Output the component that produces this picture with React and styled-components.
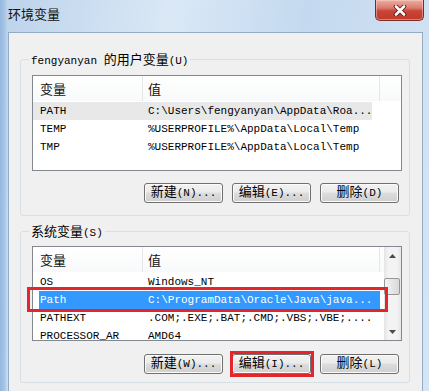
import React from 'react';
import styled, { createGlobalStyle } from 'styled-components';

const GlobalStyle = createGlobalStyle`
  html, body {
    margin: 0;
    padding: 0;
  }
  body {
    width: 429px;
    height: 391px;
    overflow: hidden;
  }
`;

const Window = styled.div`
  width: 429px;
  height: 391px;
  box-sizing: border-box;
  display: flex;
  flex-direction: column;
  overflow: hidden;
  color: #000;
  font-family: "Liberation Mono", "Noto Sans CJK SC", monospace;
  font-size: 11px;
  background:
    linear-gradient(to right, #94b8dd 0, #a9c7e6 5px, transparent 7px),
    linear-gradient(100deg, #bcd3eb 0%, #dae8f6 35%, #c4d9ef 62%, #d6e5f4 100%);
`;

const TitleBar = styled.div`
  height: 32px;
  flex: none;
  display: flex;
  justify-content: space-between;
  align-items: flex-start;
`;

const Title = styled.div`
  padding: 6px 0 0 8px;
  font-family: "Noto Sans CJK SC", sans-serif;
  font-size: 13px;
  line-height: 16px;
  color: #111;
`;

const CloseButton = styled.button`
  width: 49px;
  height: 21px;
  margin-right: 5px;
  padding: 0;
  display: flex;
  align-items: center;
  justify-content: center;
  border: 1px solid #7a2c24;
  border-top: 0;
  border-radius: 0 0 5px 5px;
  background: linear-gradient(#eab0a4 0%, #dc7a6c 40%, #c84536 55%, #c0392c 100%);
  box-shadow: inset 0 0 0 1px rgba(255, 220, 210, 0.45);
`;

const Client = styled.div`
  flex: 1;
  margin: 0 6px 0 8px;
  display: flex;
  flex-direction: column;
  background: #f0f0f0;
  border: 1px solid #93abc4;
  border-bottom: 0;
`;

const Group = styled.fieldset`
  margin: ${p => p.$gap}px 12px 0 11px;
  padding: ${p => p.$padTop}px 7px ${p => p.$padBottom}px 11px;
  min-width: 0;
  border: 1px solid #d5dfe5;
  border-radius: 3px;
`;

const Legend = styled.legend`
  margin-left: -3px;
  padding: 0 2px;
  height: 14px;
  line-height: 14px;
  white-space: nowrap;
`;

const Cjk = styled.span`
  font-family: "Noto Sans CJK SC", sans-serif;
  font-size: 13px;
  line-height: 14px;
`;

const ListBox = styled.div`
  height: ${p => p.$height}px;
  box-sizing: border-box;
  display: flex;
  border: 1px solid #828790;
  background: #fff;
`;

const ListBody = styled.div`
  flex: 1;
  min-width: 0;
  clip-path: inset(0 -20px 0 -20px);
`;

const Columns = styled.div`
  display: grid;
  grid-template-columns: 110px 237px 1fr;
`;

const HeaderRow = styled(Columns)`
  height: 25px;
  margin-bottom: 1px;
  background: linear-gradient(#ffffff, #f8f9fa);
`;

const HeadCell = styled.div`
  padding-left: ${p => (p.$value ? 5 : 7)}px;
  border-right: 1px solid #e4e6e9;
  font-family: "Noto Sans CJK SC", sans-serif;
  font-size: 13px;
  line-height: 25px;
  color: #111;

  &:last-child {
    border-right: 0;
  }
`;

const selection = {
  idle: 'linear-gradient(#e8e8e8, #e8e8e8) 0 0 / 339px 100% no-repeat',
  focus: 'linear-gradient(#3399ff, #3399ff) 6px 0 / 341px 100% no-repeat',
};

const Row = styled(Columns)`
  position: relative;
  height: 18px;
  line-height: 18px;
  white-space: nowrap;
  color: ${p => (p.$state === 'focus' ? '#fff' : '#000')};
  background: ${p => selection[p.$state] || 'none'};
`;

const NameCell = styled.div`
  padding-left: 7px;
  overflow: hidden;
`;

const ValueCell = styled.div`
  padding-left: 5px;
  overflow: hidden;
`;

const RowMarker = styled.span`
  position: absolute;
  left: -6px;
  top: -4px;
  width: 361px;
  height: 25px;
  box-sizing: border-box;
  border: 3px solid #e2262b;
  z-index: 2;
`;

const ScrollBar = styled.div`
  width: 17px;
  flex: none;
  display: flex;
  flex-direction: column;
  background: linear-gradient(to right, #e4e4e4, #f3f3f3 25%, #f3f3f3 75%, #e6e6e6);
`;

const ArrowButton = styled.div`
  height: 17px;
  display: flex;
  align-items: center;
  justify-content: center;
  margin-top: ${p => (p.$bottom ? 'auto' : '0')};
`;

const Thumb = styled.div`
  height: 17px;
  margin: 14px 1px 0 0;
  box-sizing: border-box;
  border: 1px solid #979797;
  border-radius: 2px;
  background: linear-gradient(to right, #f6f6f6, #e6e6e6 50%, #d9d9d9);
`;

const ButtonRow = styled.div`
  display: flex;
  justify-content: flex-end;
  gap: 9px;
  margin-top: ${p => p.$gap}px;
  padding-right: 3px;
`;

const Button = styled.button`
  position: relative;
  width: 79px;
  height: 20px;
  padding: 0;
  box-sizing: border-box;
  border: 1px solid #707070;
  border-radius: 3px;
  background: linear-gradient(#f2f2f2 0%, #ebebeb 45%, #dddddd 50%, #cfcfcf 100%);
  box-shadow: inset 0 0 0 1px #fbfbfb;
  color: #000;
  font-family: "Liberation Mono", "Noto Sans CJK SC", monospace;
  font-size: 11px;
  line-height: 18px;
  white-space: nowrap;

  &::after {
    content: '';
    display: ${p => (p.$marked ? 'block' : 'none')};
    position: absolute;
    inset: -4px -4px -4px -3px;
    border: 3px solid #e2262b;
  }
`;

const CloseGlyph = () => (
  <svg width="14" height="11" viewBox="0 0 14 11">
    <path d="M3 1.5 L11 9.5 M11 1.5 L3 9.5" stroke="#5a1c16" strokeWidth="4.4" strokeLinecap="round" />
    <path d="M3 1.5 L11 9.5 M11 1.5 L3 9.5" stroke="#fff" strokeWidth="2.6" strokeLinecap="round" />
  </svg>
);

const Arrow = ({ down }) => (
  <svg width="7" height="4" viewBox="0 0 7 4">
    <path d={down ? 'M0 0 H7 L3.5 4 Z' : 'M0 4 H7 L3.5 0 Z'} fill="#4a4a4a" />
  </svg>
);

const VarList = ({ rows, height, scroll }) => (
  <ListBox $height={height}>
    <ListBody>
      <HeaderRow>
        <HeadCell>变量</HeadCell>
        <HeadCell $value>值</HeadCell>
        <HeadCell />
      </HeaderRow>
      {rows.map(row => (
        <Row key={row.name} $state={row.state}>
          <NameCell>{row.name}</NameCell>
          <ValueCell>{row.value}</ValueCell>
          {row.marked && <RowMarker />}
        </Row>
      ))}
    </ListBody>
    {scroll && (
      <ScrollBar>
        <ArrowButton><Arrow /></ArrowButton>
        <Thumb />
        <ArrowButton $bottom><Arrow down /></ArrowButton>
      </ScrollBar>
    )}
  </ListBox>
);

const userVars = [
  { name: 'PATH', value: 'C:\\Users\\fengyanyan\\AppData\\Roa...', state: 'idle' },
  { name: 'TEMP', value: '%USERPROFILE%\\AppData\\Local\\Temp' },
  { name: 'TMP', value: '%USERPROFILE%\\AppData\\Local\\Temp' },
];

const systemVars = [
  { name: 'OS', value: 'Windows_NT' },
  { name: 'Path', value: 'C:\\ProgramData\\Oracle\\Java\\java...', state: 'focus', marked: true },
  { name: 'PATHEXT', value: '.COM;.EXE;.BAT;.CMD;.VBS;.VBE;....' },
  { name: 'PROCESSOR_AR', value: 'AMD64' },
];

export default function App() {
  return (
    <>
      <GlobalStyle />
      <Window>
        <TitleBar>
          <Title>环境变量</Title>
          <CloseButton type="button" aria-label="关闭"><CloseGlyph /></CloseButton>
        </TitleBar>
        <Client>
          <Group $gap={19} $padTop={9} $padBottom={12}>
            <Legend>fengyanyan <Cjk>的用户变量</Cjk>(U)</Legend>
            <VarList rows={userVars} height={96} />
            <ButtonRow $gap={12}>
              <Button type="button"><Cjk>新建</Cjk>(N)...</Button>
              <Button type="button"><Cjk>编辑</Cjk>(E)...</Button>
              <Button type="button"><Cjk>删除</Cjk>(D)</Button>
            </ButtonRow>
          </Group>
          <Group $gap={8} $padTop={8} $padBottom={8}>
            <Legend><Cjk>系统变量</Cjk>(S)</Legend>
            <VarList rows={systemVars} height={95} scroll />
            <ButtonRow $gap={13}>
              <Button type="button"><Cjk>新建</Cjk>(W)...</Button>
              <Button type="button" $marked><Cjk>编辑</Cjk>(I)...</Button>
              <Button type="button"><Cjk>删除</Cjk>(L)</Button>
            </ButtonRow>
          </Group>
        </Client>
      </Window>
    </>
  );
}
